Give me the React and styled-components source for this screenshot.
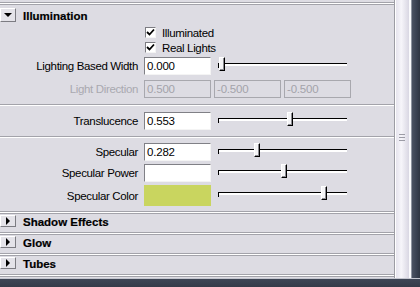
import React from "react";
import styled, { createGlobalStyle } from "styled-components";

const PANEL = "#dddce3";

const GlobalStyle = createGlobalStyle`
  html, body { margin: 0; padding: 0; }
  body {
    width: 420px;
    height: 287px;
    overflow: hidden;
    background: ${PANEL};
    font-family: "Liberation Sans", Arial, sans-serif;
  }
`;

const Window = styled.div`
  width: 420px;
  height: 287px;
  display: flex;
  flex-direction: column;
`;

const Main = styled.div`
  display: flex;
  height: 278px;
`;

const Panel = styled.div`
  width: 394px;
  display: flex;
  flex-direction: column;
  background: ${PANEL};
  padding-top: 2px;
  box-sizing: border-box;
`;

const Rule = styled.div`
  height: 3px;
  flex: none;
  margin-top: ${(p) => p.$top || 0}px;
  background: linear-gradient(
    #a3a3aa 0 1px,
    #ffffff 1px 2px,
    #a3a3aa 2px 3px
  );
`;

const Separator = styled.div`
  height: 2px;
  flex: none;
  margin-top: ${(p) => p.$top || 0}px;
  background: linear-gradient(#a3a3aa 0 1px, #ffffff 1px 2px);
`;

const FrameHeader = styled.div`
  height: ${(p) => p.$height}px;
  flex: none;
  display: flex;
  align-items: flex-start;
`;

const ArrowButton = styled.div`
  width: 16px;
  height: ${(p) => p.$height}px;
  margin-top: ${(p) => p.$top}px;
  box-sizing: border-box;
  border-top: 1px solid #ffffff;
  border-left: 1px solid #ffffff;
  border-right: 1px solid #7c7c82;
  border-bottom: 1px solid #7c7c82;
  background: #e4e3e9;
  display: flex;
  align-items: center;
  justify-content: center;
`;

const ArrowDown = styled.span`
  width: 0;
  height: 0;
  border-left: 4px solid transparent;
  border-right: 4px solid transparent;
  border-top: 4px solid #000;
`;

const ArrowRight = styled.span`
  width: 0;
  height: 0;
  border-top: 4px solid transparent;
  border-bottom: 4px solid transparent;
  border-left: 4px solid #000;
`;

const HeaderTitle = styled.div`
  margin-left: 7px;
  margin-top: ${(p) => p.$top}px;
  font-size: 11.5px;
  font-weight: bold;
  line-height: 14px;
  color: #000;
  -webkit-text-stroke: 0.2px #000;
`;

const CheckRow = styled.div`
  height: 15px;
  flex: none;
  display: flex;
  align-items: center;
  padding-left: 145px;
`;

const CheckBox = styled.div`
  width: 11px;
  height: 11px;
  box-sizing: border-box;
  background: #fff;
  border-top: 1px solid #7c7c82;
  border-left: 1px solid #7c7c82;
  border-right: 1px solid #f4f4f4;
  border-bottom: 1px solid #f4f4f4;
  display: flex;
  align-items: center;
  justify-content: center;
`;

const CheckLabel = styled.span`
  margin-left: 6px;
  font-size: 11.5px;
  letter-spacing: -0.35px;
  color: #000;
`;

const FieldRow = styled.div`
  height: ${(p) => p.$height || 19}px;
  margin-top: ${(p) => p.$top || 0}px;
  flex: none;
  display: flex;
  align-items: center;
`;

const Label = styled.div`
  width: 138px;
  text-align: right;
  font-size: 11.5px;
  letter-spacing: -0.35px;
  color: ${(p) => (p.$disabled ? "#a9a9b0" : "#000")};
`;

const Field = styled.div`
  width: 67px;
  height: 18px;
  box-sizing: border-box;
  margin-left: ${(p) => p.$left ?? 6}px;
  padding-left: 2px;
  display: flex;
  align-items: center;
  font-size: 11.5px;
  letter-spacing: -0.2px;
  background: ${(p) => (p.$disabled ? PANEL : "#fff")};
  color: ${(p) => (p.$disabled ? "#a3a3aa" : "#000")};
  border-top: 1px solid ${(p) => (p.$disabled ? "#a8a8ae" : "#808086")};
  border-left: 1px solid ${(p) => (p.$disabled ? "#a8a8ae" : "#808086")};
  border-right: 1px solid ${(p) => (p.$disabled ? "#a8a8ae" : "#f4f4f4")};
  border-bottom: 1px solid ${(p) => (p.$disabled ? "#a8a8ae" : "#f4f4f4")};
`;

const Swatch = styled.div`
  width: 67px;
  height: 21px;
  margin-left: 6px;
  background: ${(p) => p.$color};
`;

const Slider = styled.div`
  position: relative;
  width: 129px;
  height: 19px;
  margin-left: 7px;
  align-self: flex-start;
`;

const Groove = styled.div`
  position: absolute;
  left: 0;
  right: 0;
  top: 7px;
  height: 3px;
  box-sizing: border-box;
  border-top: 1px solid #000;
  background: #fff;

  &::before {
    content: "";
    position: absolute;
    left: 0;
    top: 0;
    width: 1px;
    height: 4px;
    background: #000;
  }
`;

const Thumb = styled.div`
  position: absolute;
  top: 1px;
  width: 6px;
  height: 14px;
  box-sizing: border-box;
  background: #f4f4f6;
  border-top: 1px solid #ffffff;
  border-left: 1px solid #ffffff;
  border-right: 1px solid #000;
  border-bottom: 1px solid #000;
  box-shadow: inset -1px -1px #8a8a90;
`;

const Scrollbar = styled.div`
  width: 17px;
  box-sizing: border-box;
  border-left: 1px solid #9c9ca4;
  border-right: 2px solid #fafafc;
  background: linear-gradient(90deg, #ffffff 0 1px, #e6e4ee 1px, #f6f5fa 45%, #d9d7e3 100%);
  display: flex;
  flex-direction: column;
  align-items: center;
  padding-top: 134px;
`;

const Grip = styled.div`
  width: 6px;
  height: 7px;
  background: linear-gradient(
    #9c9ca6 0 1px,
    transparent 1px 3px,
    #9c9ca6 3px 4px,
    transparent 4px 6px,
    #9c9ca6 6px 7px
  );
`;

const DarkEdge = styled.div`
  width: 9px;
  box-sizing: border-box;
  border-left: 1px solid #8e94a0;
  background: linear-gradient(90deg, #4a5262, #384050 60%, #2e3542);
`;

const BottomEdge = styled.div`
  height: 9px;
  box-sizing: border-box;
  border-top: 1px solid #c4c6cf;
  background: linear-gradient(#3e4656, #343b49);
`;

const Check = () => (
  <svg width="9" height="9" viewBox="0 0 9 9">
    <path d="M1 4 L3.5 6.5 L8 1.5" fill="none" stroke="#000" strokeWidth="1.8" />
  </svg>
);

function ValueSlider({ value }) {
  return (
    <Slider>
      <Groove />
      <Thumb style={{ left: `${Math.round(value * 123) + 1}px` }} />
    </Slider>
  );
}

function ClosedFrame({ title }) {
  return (
    <>
      <Rule />
      <FrameHeader $height={18}>
        <ArrowButton $height={12} $top={1}>
          <ArrowRight />
        </ArrowButton>
        <HeaderTitle $top={1}>{title}</HeaderTitle>
      </FrameHeader>
    </>
  );
}

export default function App() {
  return (
    <Window>
      <GlobalStyle />
      <Main>
        <Panel>
          <Rule />
          <FrameHeader $height={20}>
            <ArrowButton $height={14} $top={3}>
              <ArrowDown />
            </ArrowButton>
            <HeaderTitle $top={4}>Illumination</HeaderTitle>
          </FrameHeader>

          <CheckRow>
            <CheckBox>
              <Check />
            </CheckBox>
            <CheckLabel>Illuminated</CheckLabel>
          </CheckRow>
          <CheckRow>
            <CheckBox>
              <Check />
            </CheckBox>
            <CheckLabel>Real Lights</CheckLabel>
          </CheckRow>

          <FieldRow $top={1}>
            <Label>Lighting Based Width</Label>
            <Field>0.000</Field>
            <ValueSlider value={0} />
          </FieldRow>
          <FieldRow $top={4}>
            <Label $disabled>Light Direction</Label>
            <Field $disabled>0.500</Field>
            <Field $disabled $left={3}>-0.500</Field>
            <Field $disabled $left={3}>-0.500</Field>
          </FieldRow>

          <Separator $top={6} />
          <FieldRow $top={5}>
            <Label>Translucence</Label>
            <Field>0.553</Field>
            <ValueSlider value={0.553} />
          </FieldRow>

          <Separator $top={6} />
          <FieldRow $top={4}>
            <Label>Specular</Label>
            <Field>0.282</Field>
            <ValueSlider value={0.282} />
          </FieldRow>
          <FieldRow $top={2}>
            <Label>Specular Power</Label>
            <Field />
            <ValueSlider value={0.5} />
          </FieldRow>
          <FieldRow $top={3} $height={21}>
            <Label>Specular Color</Label>
            <Swatch $color="#c9d55f" />
            <ValueSlider value={0.83} />
          </FieldRow>

          <Rule $top={5} />
          <FrameHeader $height={18}>
            <ArrowButton $height={12} $top={1}>
              <ArrowRight />
            </ArrowButton>
            <HeaderTitle $top={1}>Shadow Effects</HeaderTitle>
          </FrameHeader>
          <ClosedFrame title="Glow" />
          <ClosedFrame title="Tubes" />
          <Rule />
        </Panel>
        <Scrollbar>
          <Grip />
        </Scrollbar>
        <DarkEdge />
      </Main>
      <BottomEdge />
    </Window>
  );
}
